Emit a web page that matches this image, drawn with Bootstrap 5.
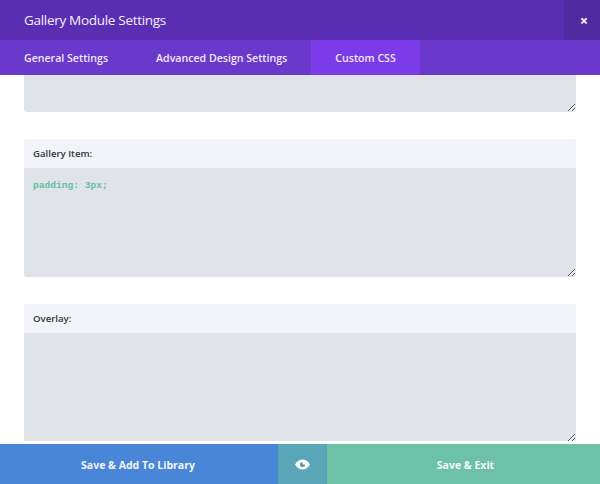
<!DOCTYPE html>
<html lang="en">
<head>
<meta charset="utf-8">
<title>Gallery Module Settings</title>
<link href="https://cdn.jsdelivr.net/npm/bootstrap@5.3.0/dist/css/bootstrap.min.css" rel="stylesheet">
<style>
html,body{height:484px;overflow:hidden;}
body{font-family:"Open Sans",sans-serif;background:#fff;}
.shell{height:484px;}
.head-bar{height:40px;background:#5a2db2;}
.head-title{font-size:13.5px;letter-spacing:-.3px;padding-left:24px;color:#f3effa;}
.close-box{width:36px;background:#512a9f;color:#fff;font-size:14px;font-weight:700;padding-left:4px;}
.tab-bar{height:35px;background:#6a38ca;}
.tab-item{font-size:10.6px;font-weight:600;color:#efe9fa;padding:2px 24px 0;}
.tab-on{background:#7c3be8;}
.scroll-zone{min-height:0;overflow:hidden;padding:0 24px;}
.css-box{height:109px;background:#e0e3e7;border:0;border-radius:0 0 3px 3px;resize:vertical;display:block;width:100%;padding:12px 9px;color:#62c0a3;font:700 9.6px/1.2 "Liberation Mono",monospace;outline:0;}
.css-first{height:37px;}
.field-group{margin-top:27px;}
.field-label{height:29px;background:#f1f3f8;color:#33373d;font-size:9.6px;font-weight:600;padding:2px 0 0 9px;border-radius:3px 3px 0 0;}
.foot-bar{height:40px;margin-top:3px;font-size:10.5px;font-weight:700;color:#f2f6fa;}
.foot-lib{width:278px;background:#4a86d8;padding:3px 2px 0 0;}
.foot-eye{width:49px;background:#5aa6b8;}
.foot-exit{background:#6cc1a6;padding:3px 0 0 4px;}
</style>
</head>
<body>
<div class="shell d-flex flex-column">
  <div class="head-bar d-flex align-items-center justify-content-between flex-shrink-0">
    <div class="head-title">Gallery Module Settings</div>
    <div class="close-box h-100 d-flex align-items-center justify-content-center">×</div>
  </div>
  <div class="tab-bar d-flex flex-shrink-0">
    <div class="tab-item d-flex align-items-center">General Settings</div>
    <div class="tab-item d-flex align-items-center">Advanced Design Settings</div>
    <div class="tab-item tab-on d-flex align-items-center">Custom CSS</div>
  </div>
  <div class="scroll-zone flex-grow-1">
    <textarea class="css-box css-first" readonly aria-label="Main element"></textarea>
    <div class="field-group">
      <div class="field-label d-flex align-items-center">Gallery Item:</div>
      <textarea class="css-box" readonly aria-label="Gallery Item">padding: 3px;</textarea>
    </div>
    <div class="field-group">
      <div class="field-label d-flex align-items-center">Overlay:</div>
      <textarea class="css-box" readonly aria-label="Overlay"></textarea>
    </div>
  </div>
  <div class="foot-bar d-flex flex-shrink-0">
    <div class="foot-lib d-flex align-items-center justify-content-center">Save &amp; Add To Library</div>
    <div class="foot-eye d-flex align-items-center justify-content-center">
      <svg width="15" height="11" viewBox="0 0 15 11" aria-hidden="true"><path d="M0 5.5C2 2 4.600.5 7.500.5S13 2 15 5.500C13 9 10.400 10.500 7.500 10.500S2 9 0 5.500Z" fill="#fff"/><path d="M7.500 3a2.500 2.500 0 1 0 2.500 2.500H7.500Z" fill="#5a8fa8"/></svg>
    </div>
    <div class="foot-exit flex-grow-1 d-flex align-items-center justify-content-center">Save &amp; Exit</div>
  </div>
</div>
<script src="https://cdn.jsdelivr.net/npm/bootstrap@5.3.0/dist/js/bootstrap.bundle.min.js"></script>
</body>
</html>
